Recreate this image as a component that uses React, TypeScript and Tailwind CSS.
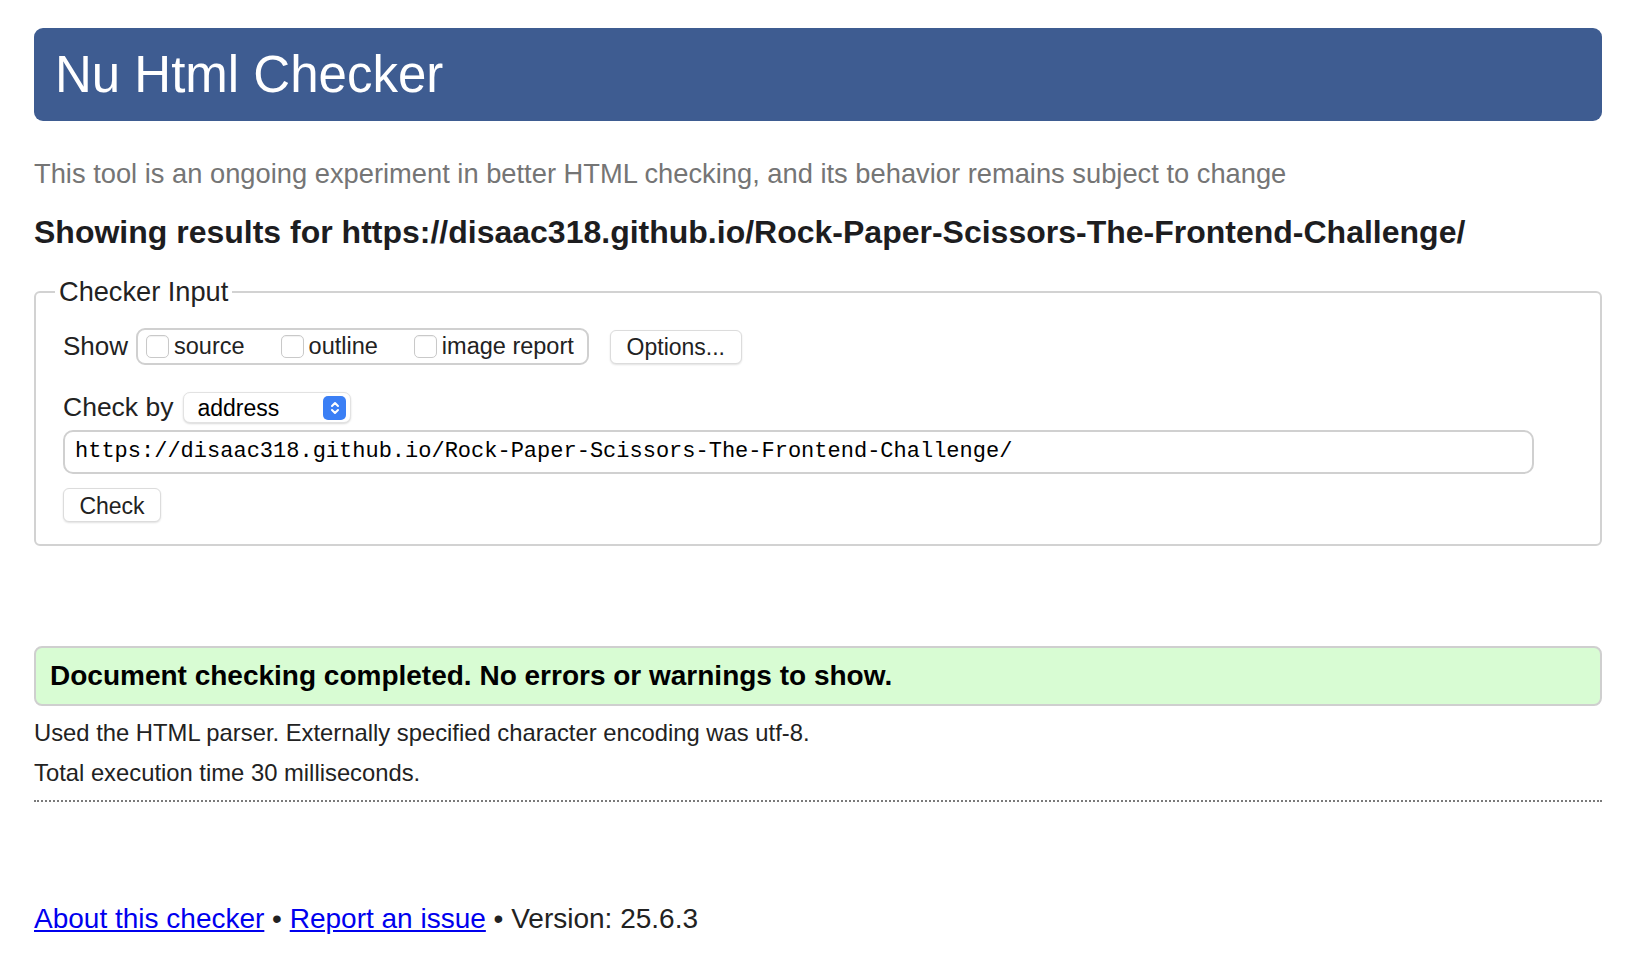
import React from 'react'

const checks = ['source', 'outline', 'image report']

function Checkbox({ label }: { label: string }) {
  return (
    <label className="flex items-center gap-[5px]">
      <span className="w-[23px] h-[23px] rounded-[5px] border border-[#c9c9c9] bg-white shadow-[inset_0_1px_1px_rgba(0,0,0,0.06)]"></span>
      <span>{label}</span>
    </label>
  )
}

export default function App() {
  return (
    <div className="min-h-screen bg-white pt-[28px] pl-[34px] pr-[24px] text-[#222] font-['Liberation_Sans',Arial,sans-serif]">
      {/* Header */}
      <div className="h-[93px] rounded-[9px] bg-[#3e5c91] flex items-center pl-[21px]">
        <h1 className="text-white text-[51px] leading-none">Nu Html Checker</h1>
      </div>

      <p className="mt-[39px] text-[27.3px] leading-[28px] text-[#757575]">
        This tool is an ongoing experiment in better HTML checking, and its behavior remains subject to change
      </p>

      <h2 className="mt-[25px] text-[32px] leading-[38px] font-bold text-[#1d1d1f]">
        Showing results for https://disaac318.github.io/Rock-Paper-Scissors-The-Frontend-Challenge/
      </h2>

      {/* Checker Input */}
      <fieldset className="mt-[27px] border-2 border-[#d2d2d2] rounded-[6px]">
        <legend className="ml-[19px] px-[4px] text-[27.2px] leading-[28px]">Checker Input</legend>

        <div className="pl-[27px] pt-[21px] pb-[22px]">
          <div className="flex items-center">
            <span className="text-[26px] mr-[8px]">Show</span>
            <div className="h-[37px] flex items-center gap-[36px] pl-[8px] pr-[13px] border-2 border-[#d0d0d0] rounded-[9px] text-[23.5px]">
              {checks.map((c) => (
                <Checkbox key={c} label={c} />
              ))}
            </div>
            <button className="ml-[21px] h-[34px] w-[132px] rounded-[6px] border border-[#dcdcdc] bg-white shadow-[0_1px_2px_rgba(0,0,0,0.12)] text-[23px] leading-[30px]">
              Options...
            </button>
          </div>

          <div className="flex items-center mt-[22px]">
            <span className="text-[26.5px] mr-[10px]">Check by</span>
            <div className="relative h-[31px] w-[168px] rounded-[7px] bg-white border border-[#e2e2e2] shadow-[0_1px_2px_rgba(0,0,0,0.15)] flex items-center pl-[13px] text-[23px] text-black">
              address
              <span className="absolute right-[4px] top-[3px] w-[23px] h-[24px] rounded-[5px] bg-[#3b7ff5] flex items-center justify-center">
                <svg width="12" height="18" viewBox="0 0 12 18" fill="none" stroke="white" strokeWidth="2" strokeLinecap="round" strokeLinejoin="round">
                  <path d="M3 7 L6 4 L9 7" />
                  <path d="M3 11 L6 14 L9 11" />
                </svg>
              </span>
            </div>
          </div>

          <div className="mt-[2px] w-[1471px] h-[44px] border-2 border-[#d0d0d0] rounded-[10px] flex items-center pl-[10px] font-['Liberation_Mono',monospace] text-[22px] text-black">
            https://disaac318.github.io/Rock-Paper-Scissors-The-Frontend-Challenge/
          </div>

          <button className="mt-[14px] h-[34px] w-[98px] rounded-[6px] border border-[#dcdcdc] bg-white shadow-[0_1px_2px_rgba(0,0,0,0.12)] text-[23px]">
            Check
          </button>
        </div>
      </fieldset>

      {/* Result */}
      <div className="mt-[100px] h-[60px] rounded-[8px] border-2 border-[#cfcfcf] bg-[#d8fcd3] flex items-center pl-[14px]">
        <p className="text-[28px] font-bold text-black">Document checking completed. No errors or warnings to show.</p>
      </div>

      <p className="mt-[13px] text-[23.8px] leading-[28px]">Used the HTML parser. Externally specified character encoding was utf-8.</p>
      <p className="mt-[12px] text-[23.8px] leading-[28px]">Total execution time 30 milliseconds.</p>

      <hr className="mt-[13px] border-0 border-t-2 border-dotted border-[#7a7a7a]" />

      {/* Footer */}
      <p className="mt-[100px] text-[28px] leading-[34px]">
        <a href="#" className="text-[#0000ee] underline">About this checker</a>
        {' • '}
        <a href="#" className="text-[#0000ee] underline">Report an issue</a>
        {' • Version: 25.6.3'}
      </p>
    </div>
  )
}
